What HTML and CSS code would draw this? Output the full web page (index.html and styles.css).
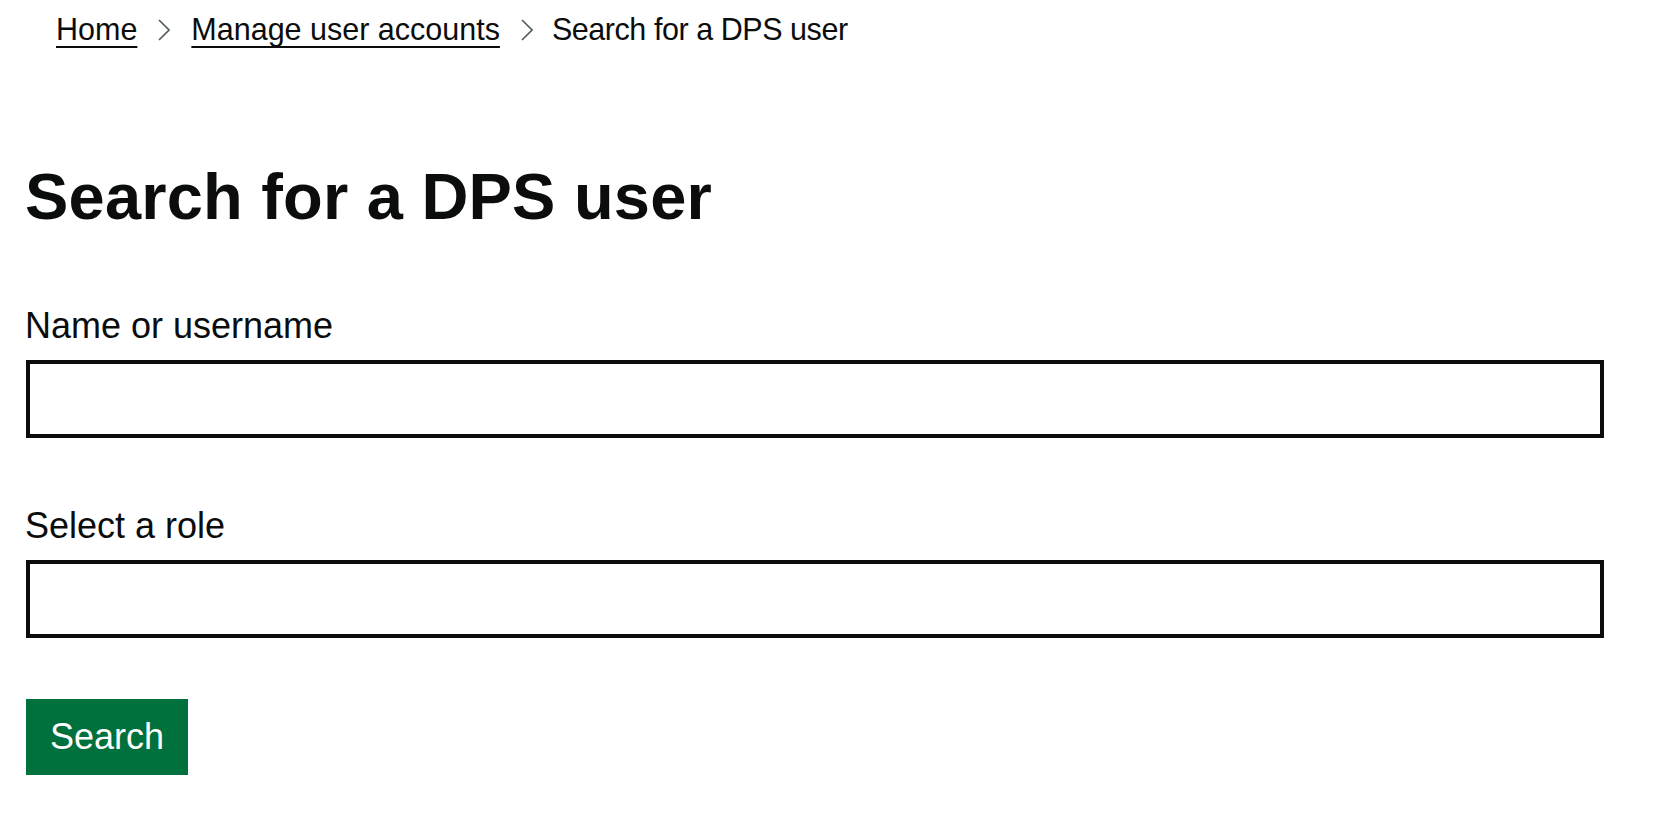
FILE: index.html
```html
<!DOCTYPE html>
<html lang="en">
<head>
<meta charset="utf-8">
<title>Search for a DPS user</title>
<link rel="stylesheet" href="styles.css">
</head>
<body>
<nav class="breadcrumbs">
  <a class="crumb-link" href="#">Home</a>
  <svg class="chevron" width="12" height="22" viewBox="0 0 12 22"><polyline points="1,1 11,11 1,21" fill="none" stroke="#505a5f" stroke-width="1.6"/></svg>
  <a class="crumb-link" href="#">Manage user accounts</a>
  <svg class="chevron chevron-last" width="12" height="22" viewBox="0 0 12 22"><polyline points="1,1 11,11 1,21" fill="none" stroke="#505a5f" stroke-width="1.6"/></svg>
  <span class="crumb-current">Search for a DPS user</span>
</nav>
<main class="main">
  <h1 class="heading">Search for a DPS user</h1>
  <form class="form">
    <div class="field">
      <label class="label" for="user">Name or username</label>
      <input class="input" id="user" type="text">
    </div>
    <div class="field">
      <label class="label" for="role">Select a role</label>
      <input class="input" id="role" type="text">
    </div>
    <button class="button" type="button">Search</button>
  </form>
</main>
</body>
</html>
```
FILE: styles.css
```css
html, body {
  margin: 0;
  padding: 0;
  background: #ffffff;
}
body {
  font-family: "Liberation Sans", Arial, sans-serif;
  color: #0b0c0c;
}
.breadcrumbs {
  display: flex;
  align-items: center;
  gap: 21px;
  padding: 11px 0 0 56px;
  height: 36px;
  font-size: 30.5px;
  line-height: 36px;
}
.crumb-link {
  color: #0b0c0c;
  text-decoration: underline;
  text-decoration-thickness: 2px;
  text-underline-offset: 6px;
}
.crumb-current {
  color: #0b0c0c;
  letter-spacing: -0.45px;
  margin-left: -2px;
}
.chevron {
  display: block;
  margin-top: 2px;
}
.main {
  padding: 0 78px 0 25px;
}
.heading {
  margin: 114px 0 0 0;
  font-size: 65px;
  line-height: 72px;
  font-weight: 700;
  letter-spacing: 0.2px;
}
.form {
  display: flex;
  flex-direction: column;
  align-items: flex-start;
  margin-top: 73px;
}
.field {
  display: flex;
  flex-direction: column;
  width: 100%;
  margin-bottom: 68px;
}
.field + .field {
  margin-bottom: 61px;
}
.label {
  font-size: 36px;
  line-height: 40px;
  margin-bottom: 14px;
}
.input {
  box-sizing: border-box;
  width: calc(100% + 1px);
  margin-left: 1px;
  height: 78px;
  border: 4px solid #0b0c0c;
  border-radius: 0;
  padding: 0 10px;
  font-family: "Liberation Sans", Arial, sans-serif;
  font-size: 36px;
  background: #fff;
}
.button {
  box-sizing: border-box;
  margin-left: 1px;
  height: 76px;
  padding: 0 24px;
  border: none;
  border-radius: 0;
  background: #00703c;
  color: #ffffff;
  font-family: "Liberation Sans", Arial, sans-serif;
  font-size: 36px;
  line-height: 36px;
  box-shadow: 0 3px 0 #002d18;
  cursor: pointer;
}
```
